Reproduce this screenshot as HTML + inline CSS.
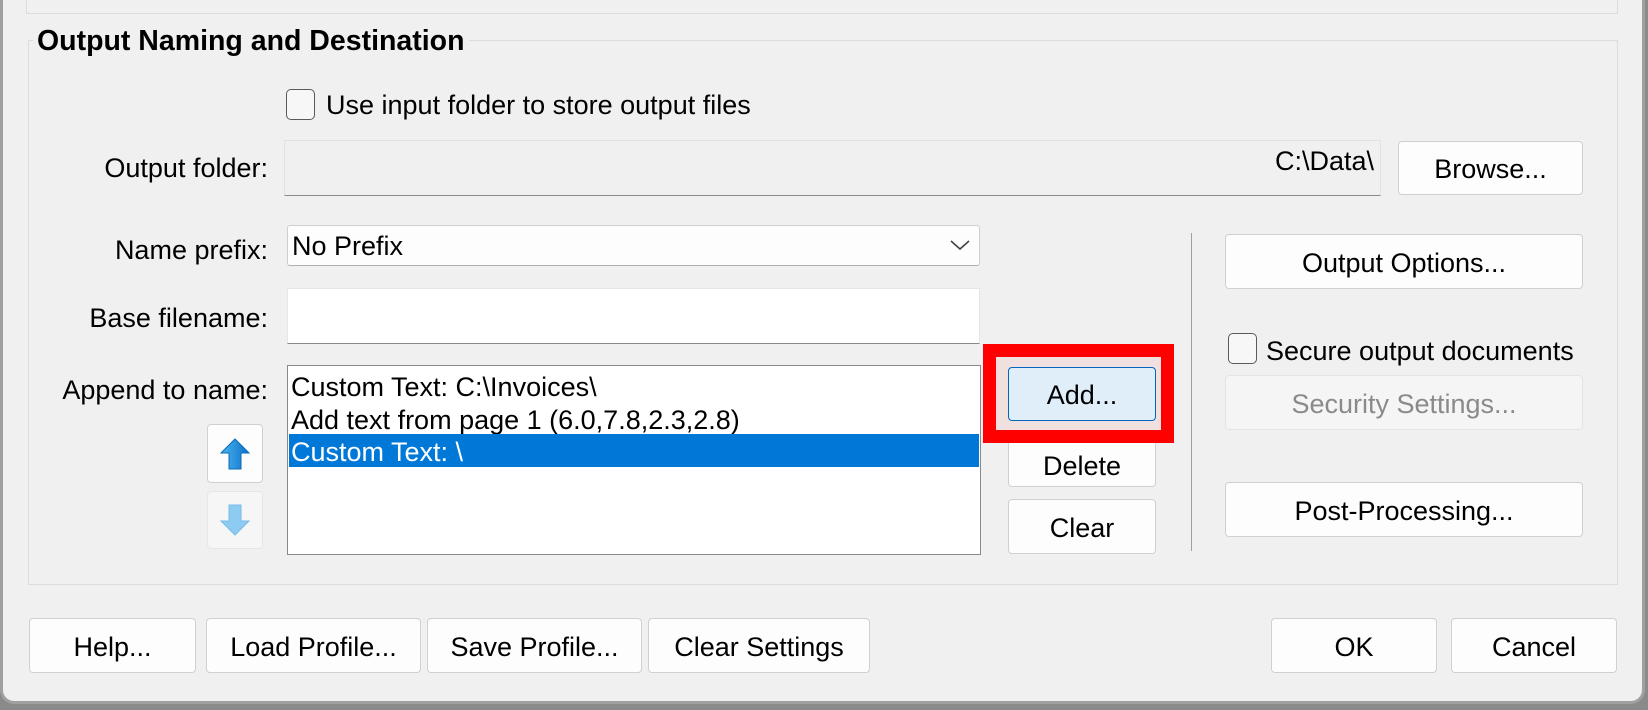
<!DOCTYPE html>
<html><head><meta charset="utf-8"><style>
*{box-sizing:border-box;margin:0;padding:0}
body{width:1648px;height:710px;background:#8a8a8a;position:relative;overflow:hidden;font-family:"Liberation Sans",sans-serif;font-size:27px;color:#000}
.win{position:absolute;left:0;top:-10px;width:1645px;height:714px;background:#f0f0f0;border:3px solid #a0a0a0;border-top:none;border-radius:0 0 14px 14px}
.a{position:absolute}
.btn{position:absolute;background:#fdfdfd;border:1px solid #d0d0d0;border-radius:4px;text-align:center;display:flex;align-items:center;justify-content:center;white-space:nowrap;padding-top:3px}
.lbl{position:absolute;text-align:right;white-space:nowrap;line-height:30px}
.cb{position:absolute;width:29px;height:31px;border:1.5px solid #5a5a5a;border-radius:5px;background:#f7f7f7}
</style></head><body>
<div class="win"></div>
<div class="a" style="left:26px;top:-2px;width:1592px;height:16px;border:1px solid #dcdcdc;border-top:none"></div>
<div class="a" style="left:28px;top:40px;width:1590px;height:545px;border:1px solid #dcdcdc"></div>
<div class="a" style="left:33px;top:25px;padding:0 4px;background:#f0f0f0;font-weight:bold;font-size:28.5px;line-height:32px;white-space:nowrap">Output Naming and Destination</div>

<div class="cb" style="left:286px;top:89px"></div>
<div class="a" style="left:326px;top:90px;line-height:30px;white-space:nowrap">Use input folder to store output files</div>

<div class="lbl" style="right:1380px;top:153px">Output folder:</div>
<div class="a" style="left:284px;top:140px;width:1097px;height:56px;background:#f0f0f0;border:1px solid #e2e2e2;border-bottom:1.5px solid #8a8a8a;text-align:right;padding-right:6px;line-height:40px">C:\Data\</div>
<div class="btn" style="left:1398px;top:141px;width:185px;height:54px">Browse...</div>

<div class="lbl" style="right:1380px;top:235px">Name prefix:</div>
<div class="a" style="left:287px;top:225px;width:693px;height:41px;background:#fdfdfd;border:1px solid #cfcfcf;border-bottom:1.5px solid #b0b0b0;border-radius:3px;padding-left:4px;line-height:40px">No Prefix</div>
<svg class="a" style="left:950px;top:239px" width="20" height="12"><path d="M1 2 L10 10 L19 2" fill="none" stroke="#444" stroke-width="1.6"/></svg>

<div class="lbl" style="right:1380px;top:303px">Base filename:</div>
<div class="a" style="left:287px;top:288px;width:693px;height:56px;background:#fff;border:1px solid #e6e6e6;border-bottom:1.5px solid #8a8a8a"></div>

<div class="lbl" style="right:1380px;top:375px">Append to name:</div>
<div class="a" style="left:287px;top:365px;width:694px;height:190px;background:#fff;border:1px solid #8a8a8a"></div>
<div class="a" style="left:291px;top:371px;line-height:33px;white-space:nowrap">Custom Text: C:\Invoices\</div>
<div class="a" style="left:291px;top:404px;line-height:33px;white-space:nowrap">Add text from page 1 (6.0,7.8,2.3,2.8)</div>
<div class="a" style="left:289px;top:434px;width:690px;height:33px;background:#0078d7;color:#fff;padding-left:2px;line-height:36px;white-space:nowrap">Custom Text: \</div>

<div class="btn" style="left:207px;top:424px;width:56px;height:59px;padding:0"><svg width="30" height="32"><defs><linearGradient id="g" x1="0" x2="1"><stop offset="0" stop-color="#4fb6f0"/><stop offset="1" stop-color="#0a6fc8"/></linearGradient></defs><path d="M15 1 L29 15 L21 15 L21 31 L9 31 L9 15 L1 15 Z" fill="url(#g)" stroke="#0a6ab8" stroke-width="1"/></svg></div>
<div class="btn" style="left:207px;top:491px;width:56px;height:58px;background:#f6f6f6;border-color:#e6e6e6;padding:0"><svg width="30" height="32"><path d="M9 1 L21 1 L21 17 L29 17 L15 31 L1 17 L9 17 Z" fill="#8dcbf3" stroke="#7bbbe8" stroke-width="1"/></svg></div>

<div class="a" style="left:983px;top:344px;width:191px;height:99px;border:13px solid #ff0000;background:#f0e0e0"></div>
<div class="btn" style="left:1008px;top:367px;width:148px;height:54px;background:#e0eef9;border-color:#0067c0">Add...</div>
<div class="btn" style="left:1008px;top:443px;width:148px;height:44px;border-top:none;border-radius:0 0 4px 4px">Delete</div>
<div class="btn" style="left:1008px;top:499px;width:148px;height:55px">Clear</div>

<div class="a" style="left:1191px;top:233px;width:1px;height:318px;background:#a0a0a0"></div>
<div class="btn" style="left:1225px;top:234px;width:358px;height:55px">Output Options...</div>
<div class="cb" style="left:1228px;top:333px"></div>
<div class="a" style="left:1266px;top:336px;line-height:30px;white-space:nowrap">Secure output documents</div>
<div class="btn" style="left:1225px;top:375px;width:358px;height:55px;background:#f5f5f5;border-color:#e4e4e4;color:#8a8a8a">Security Settings...</div>
<div class="btn" style="left:1225px;top:482px;width:358px;height:55px">Post-Processing...</div>

<div class="btn" style="left:29px;top:618px;width:167px;height:55px">Help...</div>
<div class="btn" style="left:206px;top:618px;width:215px;height:55px">Load Profile...</div>
<div class="btn" style="left:427px;top:618px;width:215px;height:55px">Save Profile...</div>
<div class="btn" style="left:648px;top:618px;width:222px;height:55px">Clear Settings</div>
<div class="btn" style="left:1271px;top:618px;width:166px;height:55px">OK</div>
<div class="btn" style="left:1451px;top:618px;width:166px;height:55px">Cancel</div>
</body></html>
